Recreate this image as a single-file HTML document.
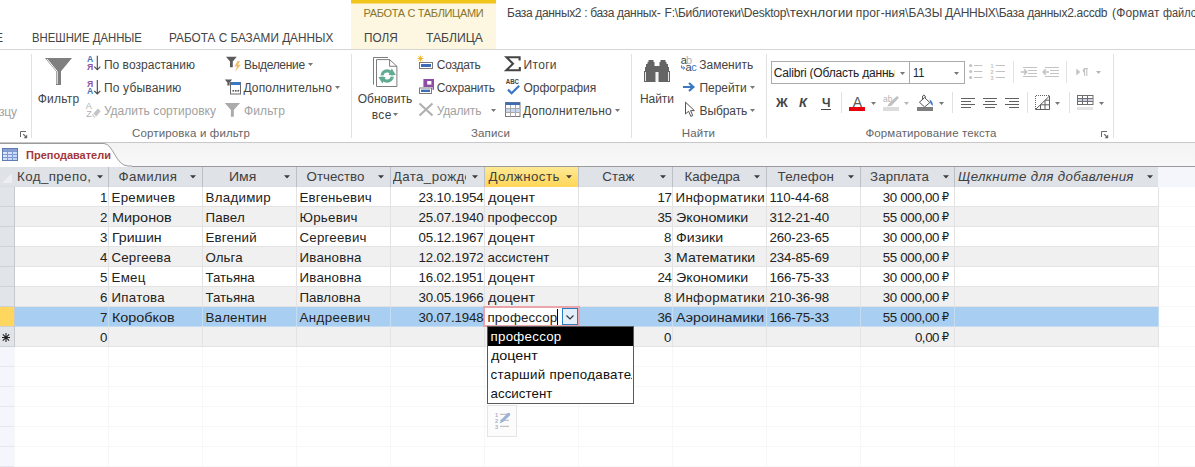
<!DOCTYPE html>
<html lang="ru"><head><meta charset="utf-8"><title>Access</title>
<style>
html,body{margin:0;padding:0;background:#fff}
#r{position:relative;width:1195px;height:467px;overflow:hidden;background:#fff;font-family:'Liberation Sans','DejaVu Sans',sans-serif}
#r div,#r svg,#r span{position:absolute;display:block}
#r span{white-space:pre;line-height:1;transform-origin:0 0}
</style></head><body><div id="r">
<div style="left:351px;top:0px;width:145px;height:49px;background:#fdf6e0;"></div>
<div style="left:351px;top:0px;width:145px;height:4px;background:linear-gradient(#f2c51c 0,#f2c51c 3px,#f8de7e 3px,#f8de7e 4px);"></div>
<div style="left:0px;top:49px;width:1195px;height:1px;background:#d6d6d6;"></div>
<div style="left:31px;top:54px;width:1px;height:84px;background:#e1e1e1;"></div>
<div style="left:351px;top:54px;width:1px;height:84px;background:#e1e1e1;"></div>
<div style="left:631px;top:54px;width:1px;height:84px;background:#e1e1e1;"></div>
<div style="left:766px;top:54px;width:1px;height:84px;background:#e1e1e1;"></div>
<div style="left:1113px;top:54px;width:1px;height:84px;background:#e1e1e1;"></div>
<div style="left:771px;top:61px;width:139px;height:23px;background:#fff;box-sizing:border-box;border:1px solid #ababab"></div>
<div style="left:909px;top:61px;width:56px;height:23px;background:#fff;box-sizing:border-box;border:1px solid #ababab"></div>
<div style="left:821px;top:108.5px;width:10px;height:1px;background:#444444;"></div>
<div style="left:849px;top:107px;width:16px;height:4px;background:#e8000c;"></div>
<div style="left:917px;top:107px;width:16px;height:4px;background:#7f7f7f;"></div>
<div style="left:883px;top:107px;width:16px;height:4px;background:#dcdcdc;"></div>
<div style="left:1077px;top:107px;width:16px;height:3px;background:#e4e4e4;"></div>
<div style="left:841px;top:92px;width:1px;height:21px;background:#e1e1e1;"></div>
<div style="left:952px;top:92px;width:1px;height:21px;background:#e1e1e1;"></div>
<div style="left:1027px;top:92px;width:1px;height:21px;background:#e1e1e1;"></div>
<div style="left:1069px;top:92px;width:1px;height:21px;background:#e1e1e1;"></div>
<div style="left:1013px;top:61px;width:1px;height:22px;background:#e1e1e1;"></div>
<div style="left:1066px;top:61px;width:1px;height:22px;background:#e1e1e1;"></div>
<div style="left:0px;top:142px;width:1195px;height:1px;background:#c8c8c8;"></div>
<div style="left:0px;top:143px;width:1195px;height:23px;background:linear-gradient(#f3f3f3,#f8f8f8);"></div>
<div style="left:0px;top:166px;width:1195px;height:1px;background:#9b9b9b;"></div>
<div style="left:0px;top:167px;width:1158px;height:20px;background:#dfe2e7;"></div>
<div style="left:1158px;top:167px;width:37px;height:20px;background:#f5f6fb;"></div>
<div style="left:485px;top:167px;width:93px;height:19px;background:linear-gradient(#ffe994,#ffd75a);"></div>
<div style="left:15px;top:187px;width:1143px;height:19px;background:#fff;"></div>
<div style="left:15px;top:206px;width:1144px;height:1px;background:#e3e3e3;"></div>
<div style="left:0px;top:187px;width:14px;height:19px;background:#e1e4e9;"></div>
<div style="left:0px;top:206px;width:14px;height:1px;background:#cfd2d7;"></div>
<div style="left:15px;top:207px;width:1143px;height:19px;background:#f0f0f0;"></div>
<div style="left:15px;top:226px;width:1144px;height:1px;background:#e3e3e3;"></div>
<div style="left:0px;top:207px;width:14px;height:19px;background:#e1e4e9;"></div>
<div style="left:0px;top:226px;width:14px;height:1px;background:#cfd2d7;"></div>
<div style="left:15px;top:227px;width:1143px;height:19px;background:#fff;"></div>
<div style="left:15px;top:246px;width:1144px;height:1px;background:#e3e3e3;"></div>
<div style="left:0px;top:227px;width:14px;height:19px;background:#e1e4e9;"></div>
<div style="left:0px;top:246px;width:14px;height:1px;background:#cfd2d7;"></div>
<div style="left:15px;top:247px;width:1143px;height:19px;background:#f0f0f0;"></div>
<div style="left:15px;top:266px;width:1144px;height:1px;background:#e3e3e3;"></div>
<div style="left:0px;top:247px;width:14px;height:19px;background:#e1e4e9;"></div>
<div style="left:0px;top:266px;width:14px;height:1px;background:#cfd2d7;"></div>
<div style="left:15px;top:267px;width:1143px;height:19px;background:#fff;"></div>
<div style="left:15px;top:286px;width:1144px;height:1px;background:#e3e3e3;"></div>
<div style="left:0px;top:267px;width:14px;height:19px;background:#e1e4e9;"></div>
<div style="left:0px;top:286px;width:14px;height:1px;background:#cfd2d7;"></div>
<div style="left:15px;top:287px;width:1143px;height:19px;background:#f0f0f0;"></div>
<div style="left:15px;top:306px;width:1144px;height:1px;background:#e3e3e3;"></div>
<div style="left:0px;top:287px;width:14px;height:19px;background:#e1e4e9;"></div>
<div style="left:0px;top:306px;width:14px;height:1px;background:#cfd2d7;"></div>
<div style="left:15px;top:307px;width:1143px;height:19px;background:#a8cff2;"></div>
<div style="left:15px;top:326px;width:1144px;height:1px;background:#c4ddf3;"></div>
<div style="left:0px;top:307px;width:14px;height:19px;background:#ffd75e;"></div>
<div style="left:0px;top:326px;width:14px;height:1px;background:#cfd2d7;"></div>
<div style="left:15px;top:327px;width:1143px;height:19px;background:#f0f0f0;"></div>
<div style="left:15px;top:346px;width:1144px;height:1px;background:#e3e3e3;"></div>
<div style="left:0px;top:327px;width:14px;height:19px;background:#e1e4e9;"></div>
<div style="left:0px;top:346px;width:14px;height:1px;background:#cfd2d7;"></div>
<div style="left:14px;top:187px;width:1px;height:160px;background:#c6c9ce;"></div>
<div style="left:0px;top:186px;width:1158px;height:1px;background:#dadde2;"></div>
<div style="left:108px;top:167px;width:1px;height:20px;background:#bcc0c6;"></div>
<div style="left:108px;top:187px;width:1px;height:160px;background:#e3e3e3;"></div>
<div style="left:108px;top:307px;width:1px;height:19px;background:#c4ddf3;"></div>
<div style="left:202px;top:167px;width:1px;height:20px;background:#bcc0c6;"></div>
<div style="left:202px;top:187px;width:1px;height:160px;background:#e3e3e3;"></div>
<div style="left:202px;top:307px;width:1px;height:19px;background:#c4ddf3;"></div>
<div style="left:296px;top:167px;width:1px;height:20px;background:#bcc0c6;"></div>
<div style="left:296px;top:187px;width:1px;height:160px;background:#e3e3e3;"></div>
<div style="left:296px;top:307px;width:1px;height:19px;background:#c4ddf3;"></div>
<div style="left:390px;top:167px;width:1px;height:20px;background:#bcc0c6;"></div>
<div style="left:390px;top:187px;width:1px;height:160px;background:#e3e3e3;"></div>
<div style="left:390px;top:307px;width:1px;height:19px;background:#c4ddf3;"></div>
<div style="left:484px;top:167px;width:1px;height:20px;background:#bcc0c6;"></div>
<div style="left:484px;top:187px;width:1px;height:160px;background:#e3e3e3;"></div>
<div style="left:484px;top:307px;width:1px;height:19px;background:#c4ddf3;"></div>
<div style="left:578px;top:167px;width:1px;height:20px;background:#bcc0c6;"></div>
<div style="left:578px;top:187px;width:1px;height:160px;background:#e3e3e3;"></div>
<div style="left:578px;top:307px;width:1px;height:19px;background:#c4ddf3;"></div>
<div style="left:672px;top:167px;width:1px;height:20px;background:#bcc0c6;"></div>
<div style="left:672px;top:187px;width:1px;height:160px;background:#e3e3e3;"></div>
<div style="left:672px;top:307px;width:1px;height:19px;background:#c4ddf3;"></div>
<div style="left:766px;top:167px;width:1px;height:20px;background:#bcc0c6;"></div>
<div style="left:766px;top:187px;width:1px;height:160px;background:#e3e3e3;"></div>
<div style="left:766px;top:307px;width:1px;height:19px;background:#c4ddf3;"></div>
<div style="left:860px;top:167px;width:1px;height:20px;background:#bcc0c6;"></div>
<div style="left:860px;top:187px;width:1px;height:160px;background:#e3e3e3;"></div>
<div style="left:860px;top:307px;width:1px;height:19px;background:#c4ddf3;"></div>
<div style="left:954px;top:167px;width:1px;height:20px;background:#bcc0c6;"></div>
<div style="left:954px;top:187px;width:1px;height:160px;background:#e3e3e3;"></div>
<div style="left:954px;top:307px;width:1px;height:19px;background:#c4ddf3;"></div>
<div style="left:1158px;top:187px;width:1px;height:160px;background:#e3e3e3;"></div>
<div style="left:1158px;top:307px;width:1px;height:19px;background:#c4ddf3;"></div>
<div style="left:0px;top:347px;width:14px;height:120px;background:#f5f6fb;"></div>
<div style="left:14px;top:347px;width:1px;height:120px;background:#f7f7f7;"></div>
<div style="left:108px;top:347px;width:1px;height:120px;background:#f7f7f7;"></div>
<div style="left:202px;top:347px;width:1px;height:120px;background:#f7f7f7;"></div>
<div style="left:296px;top:347px;width:1px;height:120px;background:#f7f7f7;"></div>
<div style="left:390px;top:347px;width:1px;height:120px;background:#f7f7f7;"></div>
<div style="left:484px;top:347px;width:1px;height:120px;background:#f7f7f7;"></div>
<div style="left:578px;top:347px;width:1px;height:120px;background:#f7f7f7;"></div>
<div style="left:672px;top:347px;width:1px;height:120px;background:#f7f7f7;"></div>
<div style="left:766px;top:347px;width:1px;height:120px;background:#f7f7f7;"></div>
<div style="left:860px;top:347px;width:1px;height:120px;background:#f7f7f7;"></div>
<div style="left:954px;top:347px;width:1px;height:120px;background:#f7f7f7;"></div>
<div style="left:1158px;top:347px;width:1px;height:120px;background:#f7f7f7;"></div>
<div style="left:0px;top:366px;width:1195px;height:1px;background:#f7f7f7;"></div>
<div style="left:0px;top:366px;width:14px;height:1px;background:#e6e7ec;"></div>
<div style="left:0px;top:386px;width:1195px;height:1px;background:#f7f7f7;"></div>
<div style="left:0px;top:386px;width:14px;height:1px;background:#e6e7ec;"></div>
<div style="left:0px;top:406px;width:1195px;height:1px;background:#f7f7f7;"></div>
<div style="left:0px;top:406px;width:14px;height:1px;background:#e6e7ec;"></div>
<div style="left:0px;top:426px;width:1195px;height:1px;background:#f7f7f7;"></div>
<div style="left:0px;top:426px;width:14px;height:1px;background:#e6e7ec;"></div>
<div style="left:0px;top:446px;width:1195px;height:1px;background:#f7f7f7;"></div>
<div style="left:0px;top:446px;width:14px;height:1px;background:#e6e7ec;"></div>
<div style="left:0px;top:466px;width:1195px;height:1px;background:#f7f7f7;"></div>
<div style="left:0px;top:466px;width:14px;height:1px;background:#e6e7ec;"></div>
<div style="left:1159px;top:206px;width:36px;height:1px;background:#f7f7f7;"></div>
<div style="left:1159px;top:226px;width:36px;height:1px;background:#f7f7f7;"></div>
<div style="left:1159px;top:246px;width:36px;height:1px;background:#f7f7f7;"></div>
<div style="left:1159px;top:266px;width:36px;height:1px;background:#f7f7f7;"></div>
<div style="left:1159px;top:286px;width:36px;height:1px;background:#f7f7f7;"></div>
<div style="left:1159px;top:306px;width:36px;height:1px;background:#f7f7f7;"></div>
<div style="left:1159px;top:326px;width:36px;height:1px;background:#f7f7f7;"></div>
<div style="left:1159px;top:346px;width:36px;height:1px;background:#f7f7f7;"></div>
<div style="left:485px;top:186px;width:93px;height:1px;background:#ffd861;"></div>
<div style="left:483px;top:306px;width:97px;height:21px;background:#fff;box-sizing:border-box;border:2px solid #eaa6aa"></div>
<div style="left:562px;top:308px;width:16px;height:17px;background:#e3f0fb;box-sizing:border-box;border:1px solid #2d7cc0"></div>
<div style="left:557px;top:309px;width:1px;height:16px;background:#000;"></div>
<div style="left:487px;top:326px;width:147px;height:78px;background:#fff;box-sizing:border-box;border:1px solid #5a5a5a"></div>
<div style="left:488px;top:327px;width:145px;height:19px;background:#000;"></div>
<div style="left:487px;top:405px;width:30px;height:32px;background:rgba(252,252,252,.85);box-sizing:border-box;border:1px solid #e4e4e4"></div>
<svg style="left:308px;top:63px" width="5" height="3" viewBox="0 0 5 3"><polygon points="0,0 5,0 2.5,3" fill="#777"/></svg>
<svg style="left:335px;top:86px" width="5" height="3" viewBox="0 0 5 3"><polygon points="0,0 5,0 2.5,3" fill="#777"/></svg>
<svg style="left:393px;top:113px" width="5" height="3" viewBox="0 0 5 3"><polygon points="0,0 5,0 2.5,3" fill="#777"/></svg>
<svg style="left:615px;top:109px" width="5" height="3" viewBox="0 0 5 3"><polygon points="0,0 5,0 2.5,3" fill="#777"/></svg>
<svg style="left:750px;top:86px" width="5" height="3" viewBox="0 0 5 3"><polygon points="0,0 5,0 2.5,3" fill="#777"/></svg>
<svg style="left:750px;top:109px" width="5" height="3" viewBox="0 0 5 3"><polygon points="0,0 5,0 2.5,3" fill="#777"/></svg>
<svg style="left:900px;top:72px" width="5" height="3" viewBox="0 0 5 3"><polygon points="0,0 5,0 2.5,3" fill="#777"/></svg>
<svg style="left:954px;top:72px" width="5" height="3" viewBox="0 0 5 3"><polygon points="0,0 5,0 2.5,3" fill="#777"/></svg>
<svg style="left:871px;top:102px" width="5" height="3" viewBox="0 0 5 3"><polygon points="0,0 5,0 2.5,3" fill="#777"/></svg>
<svg style="left:939px;top:102px" width="5" height="3" viewBox="0 0 5 3"><polygon points="0,0 5,0 2.5,3" fill="#777"/></svg>
<svg style="left:1055px;top:102px" width="5" height="3" viewBox="0 0 5 3"><polygon points="0,0 5,0 2.5,3" fill="#777"/></svg>
<svg style="left:1099px;top:102px" width="5" height="3" viewBox="0 0 5 3"><polygon points="0,0 5,0 2.5,3" fill="#777"/></svg>
<svg style="left:491px;top:109px" width="5" height="3" viewBox="0 0 5 3"><polygon points="0,0 5,0 2.5,3" fill="#777"/></svg>
<svg style="left:904px;top:102px" width="5" height="3" viewBox="0 0 5 3"><polygon points="0,0 5,0 2.5,3" fill="#b5b5b5"/></svg>
<svg style="left:1096px;top:71px" width="5" height="3" viewBox="0 0 5 3"><polygon points="0,0 5,0 2.5,3" fill="#b5b5b5"/></svg>
<svg style="left:0px;top:142px" width="132" height="25" viewBox="0 0 132 25"><path d="M0,1.5 H104 C113,1.5 116,24 128,24 H132 V25 H0 Z" fill="#fff"/><path d="M0,1.5 H104 C113,1.5 116,24 128,24 H132" fill="none" stroke="#9a9a9a" stroke-width="1"/></svg>
<svg style="left:2px;top:148px" width="16" height="13" viewBox="0 0 16 13"><defs><linearGradient id="tg" x1="0" y1="0" x2="1" y2="1"><stop offset="0" stop-color="#eef3ff"/><stop offset="1" stop-color="#b9cdf0"/></linearGradient></defs><rect x="0.5" y="0.5" width="15" height="12" fill="url(#tg)" stroke="#5f7cb6"/><rect x="1" y="1" width="14" height="2.4" fill="#8aa2d2"/><path d="M1 3.5H15M1 6.5H15M1 9.5H15M5.5 1V12M10.5 1V12" stroke="#7f9ad0" stroke-width="1" fill="none"/></svg>
<svg style="left:1px;top:172px" width="12" height="12" viewBox="0 0 12 12"><polygon points="11,1 11,11 1,11" fill="#eceef1"/></svg>
<svg style="left:97px;top:175px" width="6" height="4" viewBox="0 0 6 4"><polygon points="0,0.3 6,0.3 3,3.5" fill="#3c3c3c"/></svg>
<svg style="left:190px;top:175px" width="6" height="4" viewBox="0 0 6 4"><polygon points="0,0.3 6,0.3 3,3.5" fill="#3c3c3c"/></svg>
<svg style="left:284px;top:175px" width="6" height="4" viewBox="0 0 6 4"><polygon points="0,0.3 6,0.3 3,3.5" fill="#3c3c3c"/></svg>
<svg style="left:378px;top:175px" width="6" height="4" viewBox="0 0 6 4"><polygon points="0,0.3 6,0.3 3,3.5" fill="#3c3c3c"/></svg>
<svg style="left:472px;top:175px" width="6" height="4" viewBox="0 0 6 4"><polygon points="0,0.3 6,0.3 3,3.5" fill="#3c3c3c"/></svg>
<svg style="left:566px;top:175px" width="6" height="4" viewBox="0 0 6 4"><polygon points="0,0.3 6,0.3 3,3.5" fill="#3c3c3c"/></svg>
<svg style="left:660px;top:175px" width="6" height="4" viewBox="0 0 6 4"><polygon points="0,0.3 6,0.3 3,3.5" fill="#3c3c3c"/></svg>
<svg style="left:754px;top:175px" width="6" height="4" viewBox="0 0 6 4"><polygon points="0,0.3 6,0.3 3,3.5" fill="#3c3c3c"/></svg>
<svg style="left:848px;top:175px" width="6" height="4" viewBox="0 0 6 4"><polygon points="0,0.3 6,0.3 3,3.5" fill="#3c3c3c"/></svg>
<svg style="left:943px;top:175px" width="6" height="4" viewBox="0 0 6 4"><polygon points="0,0.3 6,0.3 3,3.5" fill="#3c3c3c"/></svg>
<svg style="left:1147px;top:175px" width="6" height="4" viewBox="0 0 6 4"><polygon points="0,0.3 6,0.3 3,3.5" fill="#3c3c3c"/></svg>
<svg style="left:565px;top:314px" width="10" height="7" viewBox="0 0 10 7"><path d="M1.5 1.5L5 5L8.5 1.5" fill="none" stroke="#333" stroke-width="1.1"/></svg>
<svg style="left:44px;top:57px" width="30" height="29" viewBox="0 0 30 29"><path d="M1 1H28L17 14.2V28H12V14.2Z" fill="#7f7f7f"/><path d="M3.2 2.2L13.2 14.4V27" fill="none" stroke="#fff" stroke-width="1"/></svg>
<svg style="left:85px;top:54px" width="18" height="18" viewBox="0 0 18 18"><text x="2" y="8.4" font-size="8.6" font-weight="700" fill="#3c73b9" style="font-family:'Liberation Sans',sans-serif">А</text><text x="2" y="16.2" font-size="8.6" font-weight="700" fill="#8d52a8" style="font-family:'Liberation Sans',sans-serif">Я</text><path d="M12.3 1.8V15.6M9.3 12.6L12.3 15.8L15.3 12.6" fill="none" stroke="#444" stroke-width="1.1"/></svg>
<svg style="left:85px;top:78px" width="18" height="18" viewBox="0 0 18 18"><text x="2" y="8.6" font-size="8.6" font-weight="700" fill="#8d52a8" style="font-family:'Liberation Sans',sans-serif">Я</text><text x="2" y="16.4" font-size="8.6" font-weight="700" fill="#3c73b9" style="font-family:'Liberation Sans',sans-serif">А</text><path d="M12.3 2V15.8M9.3 12.8L12.3 16L15.3 12.8" fill="none" stroke="#444" stroke-width="1.1"/></svg>
<svg style="left:85px;top:101px" width="18" height="18" viewBox="0 0 18 18"><text x="0.8" y="7.8" font-size="9.2" fill="#b0b0b0" style="font-family:'Liberation Sans',sans-serif">A</text><text x="1.2" y="16" font-size="9" fill="#b0b0b0" style="font-family:'Liberation Sans',sans-serif">Z</text><path d="M8.4 12.6L12.8 7.4L15.6 10.2L11.2 15.4Z" fill="#c4c4c4"/><path d="M7.2 13.6L10 16.6" stroke="#d0d0d0" stroke-width="1.4"/></svg>
<svg style="left:225px;top:55px" width="18" height="18" viewBox="0 0 18 18"><path d="M1 1.8H11.8L7.8 6.6V12.2H5V6.6Z" fill="#5b5b5b"/><path d="M12.6 6L9.4 11.6H12L10 17L15.8 9.8H13L15 6Z" fill="#f2bd6b"/></svg>
<svg style="left:224px;top:78px" width="18" height="18" viewBox="0 0 18 18"><path d="M0.8 1.4H8.2L5.6 4.4V7.6H3.4V4.4Z" fill="#5b5b5b"/><rect x="6.5" y="4.5" width="10" height="11.5" fill="#fff" stroke="#6a6a6a"/><rect x="7" y="4" width="9.5" height="3" fill="#3b78c3"/><rect x="8.5" y="12" width="1.6" height="1.6" fill="#555"/><rect x="11" y="12" width="1.6" height="1.6" fill="#555"/><rect x="13.5" y="12" width="1.6" height="1.6" fill="#555"/></svg>
<svg style="left:224px;top:102px" width="18" height="16" viewBox="0 0 18 16"><path d="M0.8 1H16L9.8 8V14.8H6.9V8Z" fill="#ababab"/></svg>
<svg style="left:372px;top:56px" width="27" height="32" viewBox="0 0 27 32"><path d="M1.5 28.7V1.5H16" fill="none" stroke="#7d7d7d"/><path d="M4.5 3.6H17.6L24.9 10.3V30.5H4.5Z" fill="#fff" stroke="#7d7d7d"/><path d="M17.6 3.6V10.3H24.9" fill="none" stroke="#7d7d7d"/><circle cx="15.1" cy="20" r="5.1" fill="none" stroke="#61ab93" stroke-width="3.3"/><rect x="7" y="19.4" width="17" height="1.2" fill="#fff"/><path d="M19.8 12.4L23.8 18.9H16.6Z" fill="#61ab93"/><path d="M10.4 27.6L6.4 21.1H13.6Z" fill="#61ab93"/></svg>
<svg style="left:417px;top:55px" width="17" height="15" viewBox="0 0 17 15"><rect x="2.5" y="7.5" width="13" height="6" fill="#fff" stroke="#7a7a7a"/><rect x="4" y="9" width="10" height="3" fill="#3e6db8"/><path d="M3.5 0.5V6.5M0.5 3.5H6.5M1.4 1.4L5.6 5.6M5.6 1.4L1.4 5.6" stroke="#eeb422" stroke-width="0.9"/></svg>
<svg style="left:417px;top:78px" width="18" height="17" viewBox="0 0 18 17"><rect x="6.4" y="1" width="10.6" height="10.8" fill="#8e4ba8"/><rect x="10.2" y="3" width="4.2" height="3.6" fill="#fff"/><rect x="1.5" y="9" width="14" height="7.5" fill="#fff"/><rect x="2.5" y="10" width="12" height="5.5" fill="#fff" stroke="#7a7a7a"/><rect x="4" y="11.6" width="9" height="2.4" fill="#3e6db8"/></svg>
<svg style="left:418px;top:102px" width="16" height="15" viewBox="0 0 16 15"><path d="M1.5 1.5L14.5 13.5M14.5 1.5L1.5 13.5" stroke="#b0b0b0" stroke-width="2.2" fill="none"/></svg>
<svg style="left:504px;top:55px" width="18" height="17" viewBox="0 0 18 17"><path d="M15.6 5.4V2.2H2.4L9 8.8L2.4 15.2H15.8V12" fill="none" stroke="#444" stroke-width="2.1" stroke-linejoin="miter"/></svg>
<svg style="left:505px;top:78px" width="16" height="18" viewBox="0 0 16 18"><text x="0.8" y="6.2" font-size="6.6" font-weight="700" fill="#444" style="font-family:'Liberation Sans',sans-serif" textLength="13.2" lengthAdjust="spacingAndGlyphs">ABC</text><path d="M3 11.6L6.6 15.2L14.2 7.8" fill="none" stroke="#3b78c3" stroke-width="2.3"/></svg>
<svg style="left:505px;top:102px" width="16" height="16" viewBox="0 0 16 16"><rect x="0.5" y="0.5" width="14.5" height="14" fill="#fff" stroke="#7a7a7a"/><rect x="0.5" y="0.5" width="14.5" height="2.5" fill="#3e6db8"/><rect x="1" y="6.5" width="13.5" height="3.6" fill="#c9d8ee"/><path d="M0.5 6.5H15M0.5 10.5H15M5.5 3V14.5M10.5 3V14.5" stroke="#a9a9a9" fill="none"/></svg>
<svg style="left:643px;top:59px" width="28" height="24" viewBox="0 0 28 24"><path d="M5.5 1H10.5V3H11.5V7H12.5V23H1V12H2V8H3V5H4.5V3H5.5Z" fill="#646464"/><path d="M17.5 1H22.5V3H23.5V5H25V8H26V12H27V23H15.5V7H16.5V3H17.5Z" fill="#646464"/><rect x="12" y="7" width="4" height="6" fill="#646464"/><path d="M2.5 13V22M14 13V22" stroke="#e8e8e8" stroke-width="1" fill="none"/><path d="M25.5 13V22" stroke="#e8e8e8" stroke-width="1" fill="none"/></svg>
<svg style="left:680px;top:55px" width="19" height="18" viewBox="0 0 19 18"><text x="0.8" y="8.8" font-size="11" fill="#444" style="font-family:'Liberation Sans',sans-serif">a</text><text x="6" y="8.8" font-size="11" fill="#b0b0b0" style="font-family:'Liberation Sans',sans-serif">b</text><text x="5.4" y="15.6" font-size="11" fill="#444" style="font-family:'Liberation Sans',sans-serif">a</text><text x="11.2" y="15.6" font-size="11" fill="#3b78c3" style="font-family:'Liberation Sans',sans-serif">c</text><path d="M1.6 10.4V13H4.4M3.2 11.4L4.8 13L3.2 14.6" fill="none" stroke="#3b78c3" stroke-width="1"/></svg>
<svg style="left:682px;top:82px" width="14" height="10" viewBox="0 0 14 10"><path d="M1 5H11.4M7 1L11.4 5L7 9" fill="none" stroke="#3b78c3" stroke-width="2.2"/></svg>
<svg style="left:684px;top:101px" width="12" height="17" viewBox="0 0 12 17"><path d="M1.5 1.2V13L4.6 10.2L6.8 15.4L8.8 14.6L6.6 9.6H10.4Z" fill="#fff" stroke="#555" stroke-width="1"/></svg>
<svg style="left:20px;top:131px" width="8" height="8" viewBox="0 0 8 8"><path d="M0.5 6V0.5H6" fill="none" stroke="#666" stroke-width="1"/><path d="M3.2 3.2L6 6" stroke="#666" stroke-width="1.1"/><path d="M7.2 3.6V7.2H3.6Z" fill="#666"/></svg>
<svg style="left:1101px;top:131px" width="8" height="8" viewBox="0 0 8 8"><path d="M0.5 6V0.5H6" fill="none" stroke="#666" stroke-width="1"/><path d="M3.2 3.2L6 6" stroke="#666" stroke-width="1.1"/><path d="M7.2 3.6V7.2H3.6Z" fill="#666"/></svg>
<svg style="left:968px;top:63px" width="16" height="17" viewBox="0 0 16 17"><circle cx="2.6" cy="2.5" r="1.5" fill="#c2c2c2"/><rect x="6" y="2" width="8.4" height="1" fill="#c2c2c2"/><circle cx="2.6" cy="8.5" r="1.5" fill="#c2c2c2"/><rect x="6" y="8" width="8.4" height="1" fill="#c2c2c2"/><circle cx="2.6" cy="14.5" r="1.5" fill="#c2c2c2"/><rect x="6" y="14" width="8.4" height="1" fill="#c2c2c2"/></svg>
<svg style="left:990px;top:63px" width="16" height="17" viewBox="0 0 16 17"><text x="0.6" y="4.8" font-size="5.4" font-weight="700" fill="#c2c2c2" style="font-family:'Liberation Sans',sans-serif">1</text><rect x="5.8" y="2" width="9.2" height="1" fill="#c2c2c2"/><text x="0.6" y="10.8" font-size="5.4" font-weight="700" fill="#c2c2c2" style="font-family:'Liberation Sans',sans-serif">2</text><rect x="5.8" y="8" width="9.2" height="1" fill="#c2c2c2"/><text x="0.6" y="16.8" font-size="5.4" font-weight="700" fill="#c2c2c2" style="font-family:'Liberation Sans',sans-serif">3</text><rect x="5.8" y="14" width="9.2" height="1" fill="#c2c2c2"/></svg>
<svg style="left:1020px;top:65px" width="18" height="14" viewBox="0 0 18 14"><path d="M3 2.5H17M8 5.5H17M8 8.5H17M3 11.5H17" stroke="#c2c2c2" fill="none"/><path d="M0.6 7H6.6M4 4.4L6.8 7L4 9.6" stroke="#c2c2c2" fill="none" stroke-width="1.5"/></svg>
<svg style="left:1042px;top:65px" width="18" height="14" viewBox="0 0 18 14"><path d="M3 2.5H17M8 5.5H17M8 8.5H17M3 11.5H17" stroke="#c2c2c2" fill="none"/><path d="M1 7H7M3.8 4.4L1 7L3.8 9.6" stroke="#c2c2c2" fill="none" stroke-width="1.5"/></svg>
<svg style="left:1076px;top:67px" width="13" height="10" viewBox="0 0 13 10"><path d="M0.3 1.4L4.3 5L0.3 8.6Z" fill="#c2c2c2"/><path d="M8.6 1.5V9M10.8 1.5V9" stroke="#c2c2c2" stroke-width="1.1" fill="none"/><path d="M8 1.5H12" stroke="#c2c2c2"/><path d="M8.6 1A2.6 2.6 0 0 0 8.6 6Z" fill="#c2c2c2"/></svg>
<svg style="left:883px;top:94px" width="17" height="13" viewBox="0 0 17 13"><text x="0" y="7.6" font-size="9.6" fill="#b4b4b4" style="font-family:'Liberation Sans',sans-serif" textLength="9.4" lengthAdjust="spacingAndGlyphs">ab</text><path d="M4.2 12.6L6 9.6L14 2L16 3.8L8.4 11.8Z" fill="#c0c0c0"/></svg>
<svg style="left:917px;top:93px" width="17" height="15" viewBox="0 0 17 15"><path d="M7.6 4.6L12.8 9.6L7.6 14L2.4 9.2Z" fill="#fff" stroke="#555" stroke-width="1"/><path d="M5.6 7V3Q7 1 8.2 3V5" fill="none" stroke="#555" stroke-width="1"/><path d="M12.4 6.4Q16.6 8.4 15.6 13Q13.6 11.4 13.2 9.6Z" fill="#3b78c3"/></svg>
<svg style="left:961px;top:97px" width="16" height="12" viewBox="0 0 16 12"><path d="M0 1.5H14M0 4.5H10M0 7.5H14M0 10.5H10" stroke="#606060" fill="none"/></svg>
<svg style="left:983px;top:97px" width="16" height="12" viewBox="0 0 16 12"><path d="M0 1.5H14M2 4.5H12M0 7.5H14M2 10.5H12" stroke="#606060" fill="none"/></svg>
<svg style="left:1005px;top:97px" width="16" height="12" viewBox="0 0 16 12"><path d="M0 1.5H14M4 4.5H14M0 7.5H14M4 10.5H14" stroke="#606060" fill="none"/></svg>
<svg style="left:1034px;top:95px" width="17" height="15" viewBox="0 0 17 15"><path d="M1.5 14V0.5H15" fill="none" stroke="#666" stroke-dasharray="1 1"/><path d="M1.5 14.5H15.5V1Z" fill="#fff" stroke="#606060"/><path d="M6.5 10V14.5M11 5.5V14.5M6.5 9.8H15.5M11 5.2H15.5" stroke="#606060" fill="none"/></svg>
<svg style="left:1077px;top:95px" width="17" height="11" viewBox="0 0 17 11"><rect x="0.5" y="0.5" width="15.5" height="9" fill="#fff" stroke="#6e6e6e"/><rect x="1" y="3.5" width="14.5" height="3" fill="#c9cfe0"/><path d="M0.5 3.5H16M0.5 6.5H16M5.5 0.5V9.5M10.5 0.5V9.5" stroke="#6e6e6e" fill="none"/></svg>
<svg style="left:494px;top:411px" width="18" height="20" viewBox="0 0 18 20"><text x="1" y="5.6" font-size="5.6" font-weight="700" fill="#a9b4c6" style="font-family:'Liberation Sans',sans-serif">1</text><rect x="6" y="2.8" width="9" height="1" fill="#b9b4b4"/><text x="1" y="11.6" font-size="5.6" font-weight="700" fill="#a9b4c6" style="font-family:'Liberation Sans',sans-serif">2</text><rect x="6" y="8.8" width="9" height="1" fill="#b9b4b4"/><text x="1" y="17.6" font-size="5.6" font-weight="700" fill="#a9b4c6" style="font-family:'Liberation Sans',sans-serif">3</text><rect x="6" y="14.8" width="9" height="1" fill="#b9b4b4"/><path d="M5.6 12.4L7.4 8.6L13.4 2.2Q15 1 16 2.6Q16.6 3.8 15.6 4.8L9.4 10.8Z" fill="#9db3d6"/></svg>
<svg style="left:1px;top:332px" width="11" height="11" viewBox="0 0 11 11"><path d="M5 1V10M1 5.5H9M1.8 2.3L8.2 8.7M8.2 2.3L1.8 8.7" stroke="#222" stroke-width="1.1" fill="none"/></svg>
<span style="top:7.69px;font-size:11px;font-weight:400;font-style:normal;color:#8a7528;left:363.50px;letter-spacing:-0.340px;">РАБОТА С ТАБЛИЦАМИ</span>
<span style="top:6.84px;font-size:12px;font-weight:400;font-style:normal;color:#444444;left:507.10px;letter-spacing:-0.339px;">База данных2 : база данных-</span>
<span style="top:6.84px;font-size:12px;font-weight:400;font-style:normal;color:#444444;left:664.60px;letter-spacing:-0.227px;">F:\Библиотеки\Desktop</span>
<span style="top:6.84px;font-size:12px;font-weight:400;font-style:normal;color:#444444;left:786.10px;transform:scaleX(1.1276);">\технлогии</span>
<span style="top:6.84px;font-size:12px;font-weight:400;font-style:normal;color:#444444;left:855.80px;letter-spacing:0.159px;">прог-ния\БАЗЫ</span>
<span style="top:6.84px;font-size:12px;font-weight:400;font-style:normal;color:#444444;left:945.10px;letter-spacing:-0.270px;">ДАННЫХ\База данных2.accdb</span>
<span style="top:6.84px;font-size:12px;font-weight:400;font-style:normal;color:#444444;left:1112.10px;letter-spacing:0.139px;">(Формат</span>
<span style="top:6.84px;font-size:12px;font-weight:400;font-style:normal;color:#444444;left:1163.40px;transform:scaleX(0.9117);">файлов</span>
<span style="top:31.20px;font-size:13px;font-weight:400;font-style:normal;color:#444444;left:-5.50px;transform:scaleX(0.9225);">Е</span>
<span style="top:31.20px;font-size:13px;font-weight:400;font-style:normal;color:#444444;left:31.60px;transform:scaleX(0.8716);">ВНЕШНИЕ ДАННЫЕ</span>
<span style="top:31.20px;font-size:13px;font-weight:400;font-style:normal;color:#444444;left:169.30px;transform:scaleX(0.9063);">РАБОТА С БАЗАМИ ДАННЫХ</span>
<span style="top:31.20px;font-size:13px;font-weight:400;font-style:normal;color:#444444;left:363.50px;transform:scaleX(0.9051);">ПОЛЯ</span>
<span style="top:31.20px;font-size:13px;font-weight:400;font-style:normal;color:#444444;left:425.70px;transform:scaleX(0.9347);">ТАБЛИЦА</span>
<span style="top:128.47px;font-size:11.5px;font-weight:400;font-style:normal;color:#666;left:132.00px;letter-spacing:0.143px;">Сортировка и фильтр</span>
<span style="top:128.47px;font-size:11.5px;font-weight:400;font-style:normal;color:#666;left:470.90px;letter-spacing:0.171px;">Записи</span>
<span style="top:128.47px;font-size:11.5px;font-weight:400;font-style:normal;color:#666;left:681.80px;letter-spacing:0.074px;">Найти</span>
<span style="top:128.47px;font-size:11.5px;font-weight:400;font-style:normal;color:#666;left:865.50px;letter-spacing:0.110px;">Форматирование текста</span>
<span style="top:105.84px;font-size:12px;font-weight:400;font-style:normal;color:#a2a2a2;left:-26.90px;letter-spacing:-0.220px;">образцу</span>
<span style="top:92.74px;font-size:12px;font-weight:400;font-style:normal;color:#444444;left:37.70px;letter-spacing:0.231px;">Фильтр</span>
<span style="top:59.14px;font-size:12px;font-weight:400;font-style:normal;color:#444444;left:103.90px;letter-spacing:0.033px;">По возрастанию</span>
<span style="top:82.04px;font-size:12px;font-weight:400;font-style:normal;color:#444444;left:103.90px;letter-spacing:0.189px;">По убыванию</span>
<span style="top:104.94px;font-size:12px;font-weight:400;font-style:normal;color:#a2a2a2;left:103.90px;letter-spacing:0.023px;">Удалить сортировку</span>
<span style="top:59.14px;font-size:12px;font-weight:400;font-style:normal;color:#444444;left:244.00px;letter-spacing:-0.310px;">Выделение</span>
<span style="top:82.04px;font-size:12px;font-weight:400;font-style:normal;color:#444444;left:243.40px;letter-spacing:0.171px;">Дополнительно</span>
<span style="top:104.94px;font-size:12px;font-weight:400;font-style:normal;color:#a2a2a2;left:244.10px;letter-spacing:0.081px;">Фильтр</span>
<span style="top:92.64px;font-size:12px;font-weight:400;font-style:normal;color:#444444;left:357.70px;letter-spacing:0.032px;">Обновить</span>
<span style="top:108.84px;font-size:12px;font-weight:400;font-style:normal;color:#444444;left:371.70px;letter-spacing:0.359px;">все</span>
<span style="top:59.14px;font-size:12px;font-weight:400;font-style:normal;color:#444444;left:436.80px;letter-spacing:-0.273px;">Создать</span>
<span style="top:82.04px;font-size:12px;font-weight:400;font-style:normal;color:#444444;left:436.80px;letter-spacing:-0.193px;">Сохранить</span>
<span style="top:104.94px;font-size:12px;font-weight:400;font-style:normal;color:#a2a2a2;left:436.80px;letter-spacing:-0.204px;">Удалить</span>
<span style="top:59.14px;font-size:12px;font-weight:400;font-style:normal;color:#444444;left:523.60px;letter-spacing:0.310px;">Итоги</span>
<span style="top:82.04px;font-size:12px;font-weight:400;font-style:normal;color:#444444;left:523.60px;letter-spacing:-0.086px;">Орфография</span>
<span style="top:104.94px;font-size:12px;font-weight:400;font-style:normal;color:#444444;left:523.10px;letter-spacing:0.194px;">Дополнительно</span>
<span style="top:92.74px;font-size:12px;font-weight:400;font-style:normal;color:#444444;left:639.90px;letter-spacing:-0.030px;">Найти</span>
<span style="top:59.14px;font-size:12px;font-weight:400;font-style:normal;color:#444444;left:699.30px;letter-spacing:-0.005px;">Заменить</span>
<span style="top:82.04px;font-size:12px;font-weight:400;font-style:normal;color:#444444;left:699.50px;letter-spacing:-0.052px;">Перейти</span>
<span style="top:104.94px;font-size:12px;font-weight:400;font-style:normal;color:#444444;left:699.50px;letter-spacing:-0.078px;">Выбрать</span>
<span style="top:66.84px;font-size:12px;font-weight:400;font-style:normal;color:#222;left:773.80px;letter-spacing:-0.197px;width:121.5px;overflow:hidden;">Calibri (Область данных)</span>
<span style="top:66.84px;font-size:12px;font-weight:400;font-style:normal;color:#222;left:913.10px;transform:scaleX(0.9143);">11</span>
<span style="top:95.50px;font-size:13px;font-weight:700;font-style:normal;color:#444444;left:776.00px;letter-spacing:0.250px;">Ж</span>
<span style="top:95.50px;font-size:13px;font-weight:700;font-style:italic;color:#444444;left:799.00px;">К</span>
<span style="top:95.50px;font-size:13px;font-weight:700;font-style:normal;color:#444444;left:822.00px;transform:scaleX(0.9299);">Ч</span>
<span style="top:95.45px;font-size:14px;font-weight:400;font-style:normal;color:#5a5a5a;left:852.80px;letter-spacing:-0.344px;">A</span>
<span style="top:150.29px;font-size:11px;font-weight:700;font-style:normal;color:#a4373a;left:26.10px;letter-spacing:-0.020px;">Преподаватели</span>
<span style="top:170.24px;font-size:13.3px;font-weight:400;font-style:normal;color:#404040;left:17.10px;letter-spacing:0.400px;">Код_препо,</span>
<span style="top:170.24px;font-size:13.3px;font-weight:400;font-style:normal;color:#404040;left:118.60px;letter-spacing:0.333px;">Фамилия</span>
<span style="top:170.24px;font-size:13.3px;font-weight:400;font-style:normal;color:#404040;left:228.70px;transform:scaleX(1.0538);">Имя</span>
<span style="top:170.24px;font-size:13.3px;font-weight:400;font-style:normal;color:#404040;left:306.60px;letter-spacing:-0.002px;">Отчество</span>
<span style="top:170.24px;font-size:13.3px;font-weight:400;font-style:normal;color:#404040;left:392.80px;letter-spacing:0.407px;width:72.8px;overflow:hidden;">Дата_рожде</span>
<span style="top:170.24px;font-size:13.3px;font-weight:400;font-style:normal;color:#404040;left:488.50px;letter-spacing:0.441px;">Должность</span>
<span style="top:170.24px;font-size:13.3px;font-weight:400;font-style:normal;color:#404040;left:602.20px;letter-spacing:0.139px;">Стаж</span>
<span style="top:170.24px;font-size:13.3px;font-weight:400;font-style:normal;color:#404040;left:684.60px;letter-spacing:-0.076px;">Кафедра</span>
<span style="top:170.24px;font-size:13.3px;font-weight:400;font-style:normal;color:#404040;left:777.60px;letter-spacing:0.175px;">Телефон</span>
<span style="top:170.24px;font-size:13.3px;font-weight:400;font-style:normal;color:#404040;left:870.10px;letter-spacing:0.083px;">Зарплата</span>
<span style="top:170.24px;font-size:13.3px;font-weight:400;font-style:italic;color:#404040;left:957.90px;letter-spacing:0.321px;">Щелкните для добавления</span>
<span style="top:190.54px;font-size:13.3px;font-weight:400;font-style:normal;color:#222222;left:100.00px;letter-spacing:-0.406px;">1</span>
<span style="top:190.54px;font-size:13.3px;font-weight:400;font-style:normal;color:#222222;left:111.50px;letter-spacing:0.272px;">Еремичев</span>
<span style="top:190.54px;font-size:13.3px;font-weight:400;font-style:normal;color:#222222;left:205.50px;letter-spacing:0.289px;">Владимир</span>
<span style="top:190.54px;font-size:13.3px;font-weight:400;font-style:normal;color:#222222;left:299.50px;letter-spacing:0.132px;">Евгеньевич</span>
<span style="top:190.54px;font-size:13.3px;font-weight:400;font-style:normal;color:#222222;left:418.60px;letter-spacing:-0.176px;">23.10.1954</span>
<span style="top:190.54px;font-size:13.3px;font-weight:400;font-style:normal;color:#222222;left:487.50px;transform:scaleX(1.0816);">доцент</span>
<span style="top:190.54px;font-size:13.3px;font-weight:400;font-style:normal;color:#222222;left:657.60px;letter-spacing:-0.398px;">17</span>
<span style="top:190.54px;font-size:13.3px;font-weight:400;font-style:normal;color:#222222;left:675.50px;letter-spacing:0.351px;">Информатики</span>
<span style="top:190.54px;font-size:13.3px;font-weight:400;font-style:normal;color:#222222;left:769.50px;letter-spacing:-0.027px;">110-44-68</span>
<span style="top:190.54px;font-size:13.3px;font-weight:400;font-style:normal;color:#222222;left:882.70px;letter-spacing:-0.306px;">30 000,00</span>
<span style="top:192.07px;font-size:11.5px;font-weight:400;font-style:normal;color:#222222;left:941.70px;letter-spacing:0.272px;">₽</span>
<span style="top:210.54px;font-size:13.3px;font-weight:400;font-style:normal;color:#222222;left:100.00px;letter-spacing:-0.406px;">2</span>
<span style="top:210.54px;font-size:13.3px;font-weight:400;font-style:normal;color:#222222;left:111.50px;transform:scaleX(1.0851);">Миронов</span>
<span style="top:210.54px;font-size:13.3px;font-weight:400;font-style:normal;color:#222222;left:205.50px;letter-spacing:0.161px;">Павел</span>
<span style="top:210.54px;font-size:13.3px;font-weight:400;font-style:normal;color:#222222;left:299.50px;letter-spacing:0.246px;">Юрьевич</span>
<span style="top:210.54px;font-size:13.3px;font-weight:400;font-style:normal;color:#222222;left:418.60px;letter-spacing:-0.176px;">25.07.1940</span>
<span style="top:210.54px;font-size:13.3px;font-weight:400;font-style:normal;color:#222222;left:487.50px;letter-spacing:0.137px;">профессор</span>
<span style="top:210.54px;font-size:13.3px;font-weight:400;font-style:normal;color:#222222;left:657.60px;letter-spacing:-0.398px;">35</span>
<span style="top:210.54px;font-size:13.3px;font-weight:400;font-style:normal;color:#222222;left:675.50px;transform:scaleX(1.0714);">Экономики</span>
<span style="top:210.54px;font-size:13.3px;font-weight:400;font-style:normal;color:#222222;left:769.50px;letter-spacing:-0.136px;">312-21-40</span>
<span style="top:210.54px;font-size:13.3px;font-weight:400;font-style:normal;color:#222222;left:882.70px;letter-spacing:-0.306px;">55 000,00</span>
<span style="top:212.07px;font-size:11.5px;font-weight:400;font-style:normal;color:#222222;left:941.70px;letter-spacing:0.272px;">₽</span>
<span style="top:230.54px;font-size:13.3px;font-weight:400;font-style:normal;color:#222222;left:100.00px;letter-spacing:-0.406px;">3</span>
<span style="top:230.54px;font-size:13.3px;font-weight:400;font-style:normal;color:#222222;left:111.50px;transform:scaleX(1.0617);">Гришин</span>
<span style="top:230.54px;font-size:13.3px;font-weight:400;font-style:normal;color:#222222;left:205.50px;letter-spacing:0.172px;">Евгений</span>
<span style="top:230.54px;font-size:13.3px;font-weight:400;font-style:normal;color:#222222;left:299.50px;letter-spacing:0.225px;">Сергеевич</span>
<span style="top:230.54px;font-size:13.3px;font-weight:400;font-style:normal;color:#222222;left:418.60px;letter-spacing:-0.176px;">05.12.1967</span>
<span style="top:230.54px;font-size:13.3px;font-weight:400;font-style:normal;color:#222222;left:487.50px;transform:scaleX(1.0816);">доцент</span>
<span style="top:230.54px;font-size:13.3px;font-weight:400;font-style:normal;color:#222222;left:664.00px;letter-spacing:-0.406px;">8</span>
<span style="top:230.54px;font-size:13.3px;font-weight:400;font-style:normal;color:#222222;left:675.50px;transform:scaleX(1.0652);">Физики</span>
<span style="top:230.54px;font-size:13.3px;font-weight:400;font-style:normal;color:#222222;left:769.50px;letter-spacing:-0.136px;">260-23-65</span>
<span style="top:230.54px;font-size:13.3px;font-weight:400;font-style:normal;color:#222222;left:882.70px;letter-spacing:-0.306px;">30 000,00</span>
<span style="top:232.07px;font-size:11.5px;font-weight:400;font-style:normal;color:#222222;left:941.70px;letter-spacing:0.272px;">₽</span>
<span style="top:250.54px;font-size:13.3px;font-weight:400;font-style:normal;color:#222222;left:100.00px;letter-spacing:-0.406px;">4</span>
<span style="top:250.54px;font-size:13.3px;font-weight:400;font-style:normal;color:#222222;left:111.50px;letter-spacing:0.180px;">Сергеева</span>
<span style="top:250.54px;font-size:13.3px;font-weight:400;font-style:normal;color:#222222;left:205.50px;letter-spacing:0.071px;">Ольга</span>
<span style="top:250.54px;font-size:13.3px;font-weight:400;font-style:normal;color:#222222;left:299.50px;letter-spacing:0.210px;">Ивановна</span>
<span style="top:250.54px;font-size:13.3px;font-weight:400;font-style:normal;color:#222222;left:418.60px;letter-spacing:-0.176px;">12.02.1972</span>
<span style="top:250.54px;font-size:13.3px;font-weight:400;font-style:normal;color:#222222;left:487.50px;letter-spacing:0.039px;">ассистент</span>
<span style="top:250.54px;font-size:13.3px;font-weight:400;font-style:normal;color:#222222;left:664.00px;letter-spacing:-0.406px;">3</span>
<span style="top:250.54px;font-size:13.3px;font-weight:400;font-style:normal;color:#222222;left:675.50px;transform:scaleX(1.0606);">Математики</span>
<span style="top:250.54px;font-size:13.3px;font-weight:400;font-style:normal;color:#222222;left:769.50px;letter-spacing:-0.136px;">234-85-69</span>
<span style="top:250.54px;font-size:13.3px;font-weight:400;font-style:normal;color:#222222;left:882.70px;letter-spacing:-0.306px;">55 000,00</span>
<span style="top:252.07px;font-size:11.5px;font-weight:400;font-style:normal;color:#222222;left:941.70px;letter-spacing:0.272px;">₽</span>
<span style="top:270.54px;font-size:13.3px;font-weight:400;font-style:normal;color:#222222;left:100.00px;letter-spacing:-0.406px;">5</span>
<span style="top:270.54px;font-size:13.3px;font-weight:400;font-style:normal;color:#222222;left:111.50px;letter-spacing:0.292px;">Емец</span>
<span style="top:270.54px;font-size:13.3px;font-weight:400;font-style:normal;color:#222222;left:205.50px;letter-spacing:-0.056px;">Татьяна</span>
<span style="top:270.54px;font-size:13.3px;font-weight:400;font-style:normal;color:#222222;left:299.50px;letter-spacing:0.210px;">Ивановна</span>
<span style="top:270.54px;font-size:13.3px;font-weight:400;font-style:normal;color:#222222;left:418.60px;letter-spacing:-0.176px;">16.02.1951</span>
<span style="top:270.54px;font-size:13.3px;font-weight:400;font-style:normal;color:#222222;left:487.50px;transform:scaleX(1.0816);">доцент</span>
<span style="top:270.54px;font-size:13.3px;font-weight:400;font-style:normal;color:#222222;left:657.60px;letter-spacing:-0.398px;">24</span>
<span style="top:270.54px;font-size:13.3px;font-weight:400;font-style:normal;color:#222222;left:675.50px;transform:scaleX(1.0714);">Экономики</span>
<span style="top:270.54px;font-size:13.3px;font-weight:400;font-style:normal;color:#222222;left:769.50px;letter-spacing:-0.136px;">166-75-33</span>
<span style="top:270.54px;font-size:13.3px;font-weight:400;font-style:normal;color:#222222;left:882.70px;letter-spacing:-0.306px;">30 000,00</span>
<span style="top:272.07px;font-size:11.5px;font-weight:400;font-style:normal;color:#222222;left:941.70px;letter-spacing:0.272px;">₽</span>
<span style="top:290.54px;font-size:13.3px;font-weight:400;font-style:normal;color:#222222;left:100.00px;letter-spacing:-0.406px;">6</span>
<span style="top:290.54px;font-size:13.3px;font-weight:400;font-style:normal;color:#222222;left:111.50px;letter-spacing:0.283px;">Ипатова</span>
<span style="top:290.54px;font-size:13.3px;font-weight:400;font-style:normal;color:#222222;left:205.50px;letter-spacing:-0.056px;">Татьяна</span>
<span style="top:290.54px;font-size:13.3px;font-weight:400;font-style:normal;color:#222222;left:299.50px;letter-spacing:0.046px;">Павловна</span>
<span style="top:290.54px;font-size:13.3px;font-weight:400;font-style:normal;color:#222222;left:418.60px;letter-spacing:-0.176px;">30.05.1966</span>
<span style="top:290.54px;font-size:13.3px;font-weight:400;font-style:normal;color:#222222;left:487.50px;transform:scaleX(1.0816);">доцент</span>
<span style="top:290.54px;font-size:13.3px;font-weight:400;font-style:normal;color:#222222;left:664.00px;letter-spacing:-0.406px;">8</span>
<span style="top:290.54px;font-size:13.3px;font-weight:400;font-style:normal;color:#222222;left:675.50px;letter-spacing:0.351px;">Информатики</span>
<span style="top:290.54px;font-size:13.3px;font-weight:400;font-style:normal;color:#222222;left:769.50px;letter-spacing:-0.136px;">210-36-98</span>
<span style="top:290.54px;font-size:13.3px;font-weight:400;font-style:normal;color:#222222;left:882.70px;letter-spacing:-0.306px;">30 000,00</span>
<span style="top:292.07px;font-size:11.5px;font-weight:400;font-style:normal;color:#222222;left:941.70px;letter-spacing:0.272px;">₽</span>
<span style="top:310.54px;font-size:13.3px;font-weight:400;font-style:normal;color:#222222;left:100.00px;letter-spacing:-0.406px;">7</span>
<span style="top:310.54px;font-size:13.3px;font-weight:400;font-style:normal;color:#222222;left:111.50px;transform:scaleX(1.0796);">Коробков</span>
<span style="top:310.54px;font-size:13.3px;font-weight:400;font-style:normal;color:#222222;left:205.50px;letter-spacing:0.197px;">Валентин</span>
<span style="top:310.54px;font-size:13.3px;font-weight:400;font-style:normal;color:#222222;left:299.50px;letter-spacing:0.391px;">Андреевич</span>
<span style="top:310.54px;font-size:13.3px;font-weight:400;font-style:normal;color:#222222;left:418.60px;letter-spacing:-0.176px;">30.07.1948</span>
<span style="top:310.54px;font-size:13.3px;font-weight:400;font-style:normal;color:#222222;left:487.50px;letter-spacing:0.137px;">профессор</span>
<span style="top:310.54px;font-size:13.3px;font-weight:400;font-style:normal;color:#222222;left:657.60px;letter-spacing:-0.398px;">36</span>
<span style="top:310.54px;font-size:13.3px;font-weight:400;font-style:normal;color:#222222;left:675.50px;transform:scaleX(1.0675);">Аэроинамики</span>
<span style="top:310.54px;font-size:13.3px;font-weight:400;font-style:normal;color:#222222;left:769.50px;letter-spacing:-0.136px;">166-75-33</span>
<span style="top:310.54px;font-size:13.3px;font-weight:400;font-style:normal;color:#222222;left:882.70px;letter-spacing:-0.306px;">55 000,00</span>
<span style="top:312.07px;font-size:11.5px;font-weight:400;font-style:normal;color:#222222;left:941.70px;letter-spacing:0.272px;">₽</span>
<span style="top:330.54px;font-size:13.3px;font-weight:400;font-style:normal;color:#222222;left:100.00px;letter-spacing:-0.406px;">0</span>
<span style="top:330.54px;font-size:13.3px;font-weight:400;font-style:normal;color:#222222;left:664.00px;letter-spacing:-0.406px;">0</span>
<span style="top:330.54px;font-size:13.3px;font-weight:400;font-style:normal;color:#222222;left:914.90px;letter-spacing:-0.423px;">0,00</span>
<span style="top:332.07px;font-size:11.5px;font-weight:400;font-style:normal;color:#222222;left:941.70px;letter-spacing:0.272px;">₽</span>
<span style="top:329.94px;font-size:13.3px;font-weight:400;font-style:normal;color:#fff;left:490.60px;letter-spacing:0.260px;">профессор</span>
<span style="top:348.84px;font-size:13.3px;font-weight:400;font-style:normal;color:#111;left:490.60px;transform:scaleX(1.0770);">доцент</span>
<span style="top:367.94px;font-size:13.3px;font-weight:400;font-style:normal;color:#111;left:490.60px;letter-spacing:0.283px;width:141.3px;overflow:hidden;">старший преподаватель</span>
<span style="top:386.94px;font-size:13.3px;font-weight:400;font-style:normal;color:#111;left:490.60px;letter-spacing:0.028px;">ассистент</span>
</div></body></html>
